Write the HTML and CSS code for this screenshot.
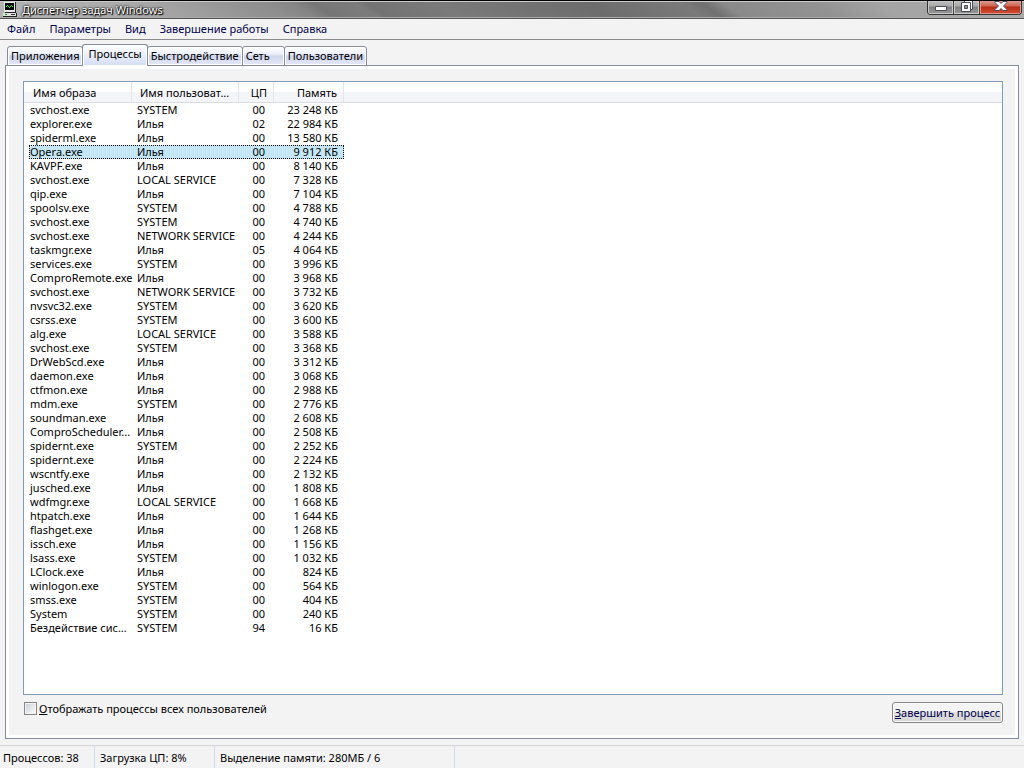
FILE: index.html
```
<!DOCTYPE html>
<html lang="ru">

<head>
    <meta charset="UTF-8">
    <meta name="viewport" content="width=device-width, initial-scale=1.0">
    <title>Диспетчер задач Windows</title>
    <link rel="stylesheet" href="styles.css">
</head>

<body>
    <header class="titlebar">
        <svg class="app-icon" width="16" height="16" viewBox="0 0 16 16" shape-rendering="crispEdges">
            <path fill="#e8e8e8" d="M2 0h11v10H2z" />
            <path fill="#222" d="M13 0h1v11H3v-1h10z" />
            <path fill="#000" d="M3 1h9v7H3z" />
            <path fill="#0f0" d="M4 4h1v1H4zM5 3h1v1H5zM6 4h1v1H6zM7 5h1v1H7zM8 4h1v1H8zM9 3h1v1H9zM10 4h1v1h-1z" />
            <path fill="#e0e0e0" d="M1 11h13v3H1z" />
            <path fill="#222" d="M1 14h14v1H1zM14 11h1v3h-1z" />
            <path fill="#0a0" d="M3 12h2v1H3z" />
            <path fill="#333" d="M9 12h4v1H9z" />
        </svg>
        <h1>Диспетчер задач Windows</h1>
        <div class="window-buttons">
            <button class="win-min" aria-label="Свернуть">
                <svg width="14" height="12" viewBox="0 0 14 12"><path fill="#fff" stroke="#4a4b5c" d="M1.500 5.500h11v4h-11z" /></svg>
            </button>
            <button class="win-restore" aria-label="Восстановить">
                <svg width="14" height="14" viewBox="0 0 14 14"><path fill="#fff" stroke="#4a4b5c" d="M4.500 -.5h8v9h-8z" /><path fill="#fff" stroke="#4a4b5c" d="M1.500 1.500h9v9h-9z" /><path fill="#999" stroke="#4a4b5c" d="M4.500 4.500h3v3h-3z" /></svg>
            </button>
            <button class="win-close" aria-label="Закрыть">
                <svg width="14" height="12" viewBox="0 0 14 12"><path fill="#fff" stroke="#4a4b5c" d="M1 .5h4l2 2 2-2h4v1L9.500 5l3.500 3.500v1H9l-2-2-2 2H1v-1L4.500 5 1 1.500z" /></svg>
            </button>
        </div>
    </header>

    <nav class="menu">
        <button>Файл</button>
        <button>Параметры</button>
        <button>Вид</button>
        <button>Завершение работы</button>
        <button>Справка</button>
    </nav>

    <main>
        <div class="tabs" role="tablist">
            <button role="tab">Приложения</button>
            <button role="tab" class="active" aria-selected="true">Процессы</button>
            <button role="tab">Быстродействие</button>
            <button role="tab">Сеть</button>
            <button role="tab">Пользователи</button>
        </div>

        <section class="panel">
            <div class="list">
                <table>
                    <thead>
                        <tr><th class="name">Имя образа</th><th class="user">Имя пользоват...</th><th class="cpu">ЦП</th><th class="mem">Память</th><th></th></tr>
                    </thead>
                    <tbody id="processes"></tbody>
                </table>
            </div>
            <div class="actions">
                <label><input type="checkbox"><span><u>О</u>тображать процессы всех пользователей</span></label>
                <button class="end-process"><u>З</u>авершить процесс</button>
            </div>
        </section>
    </main>

    <footer class="status">
        <span class="count">Процессов: 38</span>
        <span class="load">Загрузка ЦП: 8%</span>
        <span class="commit">Выделение памяти: 280МБ / 6</span>
    </footer>

    <script src="script.js"></script>
</body>

</html>
```
FILE: styles.css
```
*,
*::before,
*::after {
    box-sizing: border-box;
}

body {
    display: flex;
    flex-direction: column;
    min-height: 100vh;
    margin: 0;
    background: #f3f3f3;
    color: #000;
    font: 11px/14px 'Noto Sans', sans-serif;
}

button {
    margin: 0;
    padding: 0;
    border: 0;
    background: none;
    color: inherit;
    font: inherit;
}

/* title bar */
.titlebar {
    display: flex;
    height: 19px;
    padding-left: 2px;
    border-top: 1px solid #000;
    border-bottom: 1px solid #555;
    background: linear-gradient(34deg, #b4b4b4 0%, #aaa 14%, #8c8c8c 28%, #858585 30%, #767676 32%, #7c7c7c 36%, #737373 37%, #7a7a7a 44%, #6c6c6c 58%, #7a7a7a 67%, #707070 69%, #8a8a8a 71%, #939393 80%, #a4a4a4 86%, #aaa 100%);
    box-shadow: inset 0 1px #ccc, inset 0 -1px #aaa;
}

.app-icon {
    margin-top: 1px;
}

h1 {
    flex: 1;
    margin: 0 0 0 4px;
    color: #fff;
    font-size: 11px;
    font-weight: normal;
    line-height: 17px;
    text-shadow: 1px 1px 1px #000, 0 0 2px #000, 0 0 2px #000;
}

.window-buttons {
    display: flex;
    height: 14px;
    margin-right: 2px;
    border: 1px solid #333;
    border-top: 0;
    border-radius: 0 0 4px 4px;
    overflow: hidden;
}

.window-buttons button {
    display: flex;
    align-items: flex-start;
    justify-content: center;
    width: 26px;
    border-right: 1px solid #444;
    background: linear-gradient(#bbb, #aaa 40%, #808080 45%, #999);
    box-shadow: inset 0 0 0 1px #c8c8c8;
}

.window-buttons .win-close {
    width: 41px;
    border: 0;
    background: linear-gradient(#d9968a, #cf6450 40%, #b52a12 45%, #d85038);
    box-shadow: inset 0 0 0 1px #dd9a8c;
}

/* menu */
.menu {
    display: flex;
    gap: 14px;
    height: 21px;
    padding-left: 7px;
    border-bottom: 1px solid #8c8c8c;
    color: #00004d;
}

/* tabs */
main {
    display: flex;
    flex: 1;
    flex-direction: column;
    padding: 4px 5px 6px;
}

.tabs {
    display: flex;
    align-items: flex-end;
    height: 22px;
    margin-bottom: -1px;
    padding-left: 2px;
}

.tabs button {
    min-width: 43px;
    height: 20px;
    margin-right: -1px;
    padding: 0 3px 1px;
    border: 1px solid #868c9c;
    border-radius: 3px 3px 0 0;
    background: linear-gradient(#fff, #eceffa 40%, #d0d6ec 50%, #e4e8f8);
    box-shadow: inset 0 0 0 1px #fff;
    text-align: left;
}

.tabs .active {
    z-index: 1;
    height: 22px;
    padding: 0 5px 3px;
    border-bottom: 0;
    background: linear-gradient(#fff, #d3dcf3);
}

.panel {
    display: flex;
    flex: 1;
    flex-direction: column;
    padding: 15px 15px 15px 17px;
    border: 1px solid #868c9c;
    box-shadow: inset 0 0 0 3px #fff;
}

/* process list */
.list {
    flex: 1;
    border: 1px solid #7f9db9;
    background: #fff;
}

table {
    width: 100%;
    border-collapse: separate;
    border-spacing: 0;
    table-layout: fixed;
}

th,
td {
    height: 14px;
    padding: 0;
    font-weight: normal;
    line-height: 12px;
    text-align: left;
    white-space: nowrap;
}

th {
    height: 21px;
    padding-top: 2px;
    border-bottom: 1px solid #d9dce0;
    border-right: 1px solid #e2e5ea;
    background: linear-gradient(#fff 50%, #f4f5f8 50%);
}

th:last-child {
    border-right: 0;
}

.name {
    width: 108px;
    padding-left: 6px;
}

.user {
    width: 107px;
    padding-left: 5px;
}

th.name {
    padding-left: 9px;
}

th.user {
    padding-left: 8px;
}

.cpu {
    width: 35px;
    padding-right: 6px;
    text-align: right;
}

.mem {
    width: 70px;
    padding-right: 6px;
    text-align: right;
}

td.cpu {
    padding-right: 9px;
}

.selected {
    position: relative;
    background: linear-gradient(#c5e7f5, #c5e7f5) 5px 0 / 315px 14px no-repeat;
}

.selected::after {
    content: '';
    position: absolute;
    top: 0;
    bottom: 0;
    left: 5px;
    width: 315px;
    border: 1px dotted #000;
}

/* bottom row */
.actions {
    display: flex;
    justify-content: space-between;
    padding-top: 7px;
}

.actions label {
    display: flex;
    gap: 2px;
    height: 15px;
}

.actions input {
    width: 13px;
    height: 13px;
    margin: 0 0 0 1px;
    appearance: none;
    border: 1px solid #868686;
    background: linear-gradient(135deg, #c8ccd4, #fff);
    box-shadow: inset 0 0 0 1px #f3f3f3;
}

.end-process {
    width: 111px;
    height: 21px;
    border: 1px solid #868686;
    border-radius: 3px;
    background: linear-gradient(#f4f4f4 50%, #e0e0e0 50%, #d6d6d6);
    box-shadow: inset 0 0 0 1px #fafafa;
    color: #00004d;
}

/* status bar */
.status {
    display: flex;
    height: 23px;
    border-top: 1px solid #d6d6d6;
    line-height: 24px;
}

.status span {
    padding-left: 5px;
    border-right: 1px solid #d2daf0;
}

.status .count {
    width: 95px;
    padding-left: 3px;
}

.status .load {
    width: 120px;
}

.status .commit {
    width: 240px;
}
```
FILE: script.js
```
const processes = [
    ['svchost.exe', 'SYSTEM', '00', '23 248'],
    ['explorer.exe', 'Илья', '02', '22 984'],
    ['spiderml.exe', 'Илья', '00', '13 580'],
    ['Opera.exe', 'Илья', '00', '9 912'],
    ['KAVPF.exe', 'Илья', '00', '8 140'],
    ['svchost.exe', 'LOCAL SERVICE', '00', '7 328'],
    ['qip.exe', 'Илья', '00', '7 104'],
    ['spoolsv.exe', 'SYSTEM', '00', '4 788'],
    ['svchost.exe', 'SYSTEM', '00', '4 740'],
    ['svchost.exe', 'NETWORK SERVICE', '00', '4 244'],
    ['taskmgr.exe', 'Илья', '05', '4 064'],
    ['services.exe', 'SYSTEM', '00', '3 996'],
    ['ComproRemote.exe', 'Илья', '00', '3 968'],
    ['svchost.exe', 'NETWORK SERVICE', '00', '3 732'],
    ['nvsvc32.exe', 'SYSTEM', '00', '3 620'],
    ['csrss.exe', 'SYSTEM', '00', '3 600'],
    ['alg.exe', 'LOCAL SERVICE', '00', '3 588'],
    ['svchost.exe', 'SYSTEM', '00', '3 368'],
    ['DrWebScd.exe', 'Илья', '00', '3 312'],
    ['daemon.exe', 'Илья', '00', '3 068'],
    ['ctfmon.exe', 'Илья', '00', '2 988'],
    ['mdm.exe', 'SYSTEM', '00', '2 776'],
    ['soundman.exe', 'Илья', '00', '2 608'],
    ['ComproScheduler...', 'Илья', '00', '2 508'],
    ['spidernt.exe', 'SYSTEM', '00', '2 252'],
    ['spidernt.exe', 'Илья', '00', '2 224'],
    ['wscntfy.exe', 'Илья', '00', '2 132'],
    ['jusched.exe', 'Илья', '00', '1 808'],
    ['wdfmgr.exe', 'LOCAL SERVICE', '00', '1 668'],
    ['htpatch.exe', 'Илья', '00', '1 644'],
    ['flashget.exe', 'Илья', '00', '1 268'],
    ['issch.exe', 'Илья', '00', '1 156'],
    ['lsass.exe', 'SYSTEM', '00', '1 032'],
    ['LClock.exe', 'Илья', '00', '824'],
    ['winlogon.exe', 'SYSTEM', '00', '564'],
    ['smss.exe', 'SYSTEM', '00', '404'],
    ['System', 'SYSTEM', '00', '240'],
    ['Бездействие сис...', 'SYSTEM', '94', '16']
];

document.getElementById('processes').innerHTML = processes.map(([name, user, cpu, mem]) => `
    <tr${name === 'Opera.exe' ? ' class="selected"' : ''}>
        <td class="name">${name}</td><td class="user">${user}</td><td class="cpu">${cpu}</td><td class="mem">${mem} КБ</td>
    </tr>`).join('');
```
